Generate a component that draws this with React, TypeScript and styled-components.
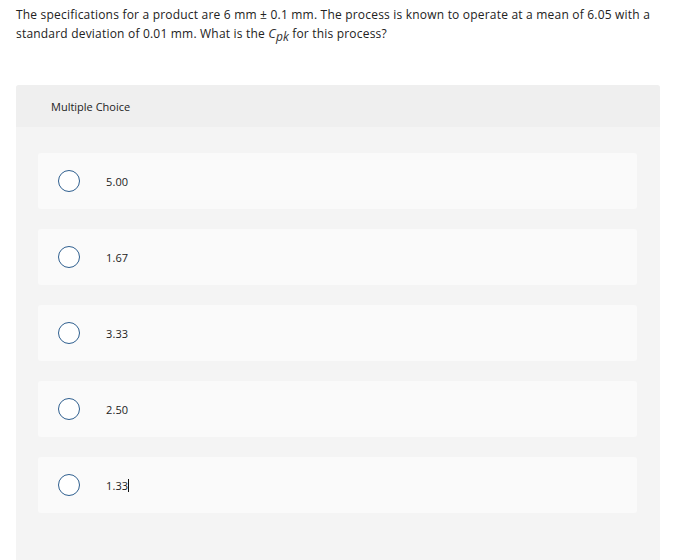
import styled, { createGlobalStyle } from "styled-components";

const GlobalStyle = createGlobalStyle`
  html, body {
    margin: 0;
    padding: 0;
    background: #ffffff;
    font-family: "Open Sans", "Liberation Sans", Arial, sans-serif;
  }
`;

const Page = styled.div`
  width: 679px;
  height: 560px;
  overflow: hidden;
  padding: 6px 0 0 16px;
  box-sizing: border-box;
`;

const Prompt = styled.p`
  margin: 0;
  width: 660px;
  font-size: 12px;
  line-height: 18px;
  color: #222;
  letter-spacing: 0.2px;
`;

const Cpk = styled.span`
  font-style: italic;
  font-size: 13px;
  color: #333;
  letter-spacing: 0;

  sub {
    font-size: 12px;
    vertical-align: -3px;
    line-height: 0;
  }
`;

const Panel = styled.section`
  margin-top: 42px;
  width: 644px;
  background: #f4f4f4;
  border-radius: 3px 3px 0 0;
  padding-bottom: 60px;
`;

const PanelHeader = styled.header`
  height: 42px;
  background: #efefef;
  display: flex;
  align-items: center;
  padding-left: 35px;
  font-size: 11px;
  color: #222;
  border-radius: 3px 3px 0 0;
`;

const Choices = styled.div`
  display: flex;
  flex-direction: column;
  gap: 20px;
  padding: 26px 23px 0 22px;
`;

const Choice = styled.label`
  height: 56px;
  background: #fafafa;
  border-radius: 3px;
  display: flex;
  align-items: center;
  padding-left: 20px;
  gap: 26px;
  font-size: 11px;
  letter-spacing: 0.1px;
  color: #222;
`;

const Radio = styled.span`
  width: 20px;
  height: 20px;
  border: 1.5px solid #2f5f8f;
  border-radius: 50%;
  background: #fff;
  flex-shrink: 0;
`;

const Caret = styled.span`
  display: inline-block;
  width: 1px;
  height: 13px;
  background: #111;
  vertical-align: -2px;
`;

const options = ["5.00", "1.67", "3.33", "2.50", "1.33"];

export default function App() {
  return (
    <Page>
      <GlobalStyle />
      <Prompt>
        The specifications for a product are 6 mm ± 0.1 mm. The process is known to operate at a mean of 6.05 with a
        <br />
        standard deviation of 0.01 mm. What is the{" "}
        <Cpk>
          C<sub>pk</sub>
        </Cpk>{" "}
        for this process?
      </Prompt>
      <Panel>
        <PanelHeader>Multiple Choice</PanelHeader>
        <Choices>
          {options.map((o, i) => (
            <Choice key={o}>
              <Radio />
              <span>
                {o}
                {i === options.length - 1 && <Caret />}
              </span>
            </Choice>
          ))}
        </Choices>
      </Panel>
    </Page>
  );
}
